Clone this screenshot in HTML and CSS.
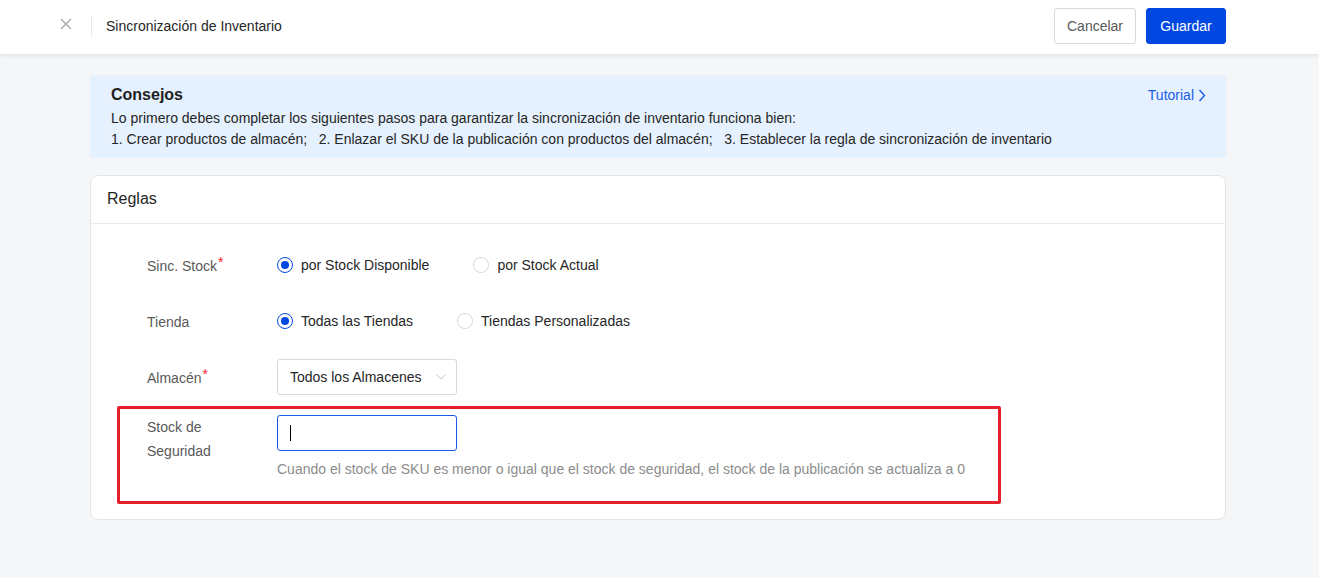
FILE: index.html
```html
<!DOCTYPE html>
<html lang="es">
<head>
<meta charset="utf-8">
<title>Sincronización de Inventario</title>
<link rel="stylesheet" href="styles.css">
</head>
<body>
<header class="topbar">
  <div class="topbar-left">
    <span class="close-btn" aria-label="Cerrar">
      <svg width="12" height="12" viewBox="0 0 12 12"><path d="M1 1L11 11M11 1L1 11" stroke="#a3a3a3" stroke-width="1.2" fill="none"/></svg>
    </span>
    <span class="vdivider"></span>
    <span class="page-title">Sincronización de Inventario</span>
  </div>
  <div class="topbar-actions">
    <button class="btn btn-default">Cancelar</button>
    <button class="btn btn-primary">Guardar</button>
  </div>
</header>

<main class="content">
  <section class="tips">
    <div class="tips-text">
      <div class="tips-title">Consejos</div>
      <div class="tips-line">Lo primero debes completar los siguientes pasos para garantizar la sincronización de inventario funciona bien:</div>
      <div class="tips-line">1. Crear productos de almacén;&nbsp;&nbsp;&nbsp;2. Enlazar el SKU de la publicación con productos del almacén;&nbsp;&nbsp;&nbsp;3. Establecer la regla de sincronización de inventario</div>
    </div>
    <a class="tutorial" href="#">Tutorial
      <svg width="8" height="13" viewBox="0 0 8 13"><path d="M1.5 1L6.5 6.5L1.5 12" stroke="#1a5be6" stroke-width="1.4" fill="none"/></svg>
    </a>
  </section>

  <section class="card">
    <div class="card-header">Reglas</div>
    <div class="card-body">
      <div class="form-row">
        <div class="form-label">Sinc. Stock<span class="req">*</span></div>
        <div class="form-control radios">
          <label class="radio checked"><span class="radio-dot"></span>por Stock Disponible</label>
          <label class="radio"><span class="radio-dot"></span>por Stock Actual</label>
        </div>
      </div>
      <div class="form-row">
        <div class="form-label">Tienda</div>
        <div class="form-control radios">
          <label class="radio checked"><span class="radio-dot"></span>Todas las Tiendas</label>
          <label class="radio"><span class="radio-dot"></span>Tiendas Personalizadas</label>
        </div>
      </div>
      <div class="form-row">
        <div class="form-label">Almacén<span class="req">*</span></div>
        <div class="form-control">
          <div class="select">
            <span>Todos los Almacenes</span>
            <svg width="10" height="6" viewBox="0 0 10 6"><path d="M0.5 0.5L5 5L9.5 0.5" stroke="#c4c4c4" stroke-width="1" fill="none"/></svg>
          </div>
        </div>
      </div>
      <div class="form-row form-row-last">
        <div class="form-label multiline">Stock de<br>Seguridad</div>
        <div class="form-control stacked">
          <div class="input focused"><span class="caret"></span></div>
          <div class="hint">Cuando el stock de SKU es menor o igual que el stock de seguridad, el stock de la publicación se actualiza a 0</div>
        </div>
      </div>
    </div>
    <div class="highlight-box"></div>
  </section>
</main>
</body>
</html>
```

FILE: styles.css
```css
* { box-sizing: border-box; }

html, body {
  margin: 0;
  padding: 0;
  height: 100%;
}

body {
  background: #f5f6f8;
  font-family: "Liberation Sans", Arial, sans-serif;
  color: #262626;
  font-size: 14px;
}

.topbar {
  height: 54px;
  background: #fff;
  box-shadow: 0 2px 4px rgba(0, 0, 0, 0.08);
  display: flex;
  align-items: center;
  justify-content: space-between;
  padding: 0 93px 0 60px;
  position: relative;
}

.topbar-left {
  display: flex;
  align-items: center;
  margin-top: -2px;
}

.close-btn {
  width: 12px;
  height: 12px;
  display: flex;
  margin-right: 19px;
  margin-top: -4px;
}

.vdivider {
  width: 1px;
  height: 20px;
  background: #e8e8e8;
  margin-right: 14px;
}

.page-title {
  font-size: 14px;
  color: #262626;
}

.topbar-actions {
  display: flex;
  gap: 10px;
  margin-top: -3px;
}

.btn {
  height: 36px;
  border-radius: 3px;
  font-family: "Liberation Sans", Arial, sans-serif;
  font-size: 14px;
  padding: 0 12px;
  cursor: pointer;
}

.btn-default {
  background: #fff;
  border: 1px solid #d9d9d9;
  color: #595959;
  width: 82px;
}

.btn-primary {
  background: #0148e3;
  border: 1px solid #0148e3;
  color: #fff;
  width: 80px;
}

.content {
  padding: 21px 93px 0 90px;
}

.tips {
  background: #e5f1fe;
  border-radius: 4px;
  padding: 9px 20px 8px 21px;
  display: flex;
  justify-content: space-between;
  align-items: flex-start;
}

.tips-title {
  font-size: 16px;
  font-weight: bold;
  line-height: 22px;
  margin-bottom: 2px;
  color: #1f1f1f;
}

.tips-line {
  line-height: 21px;
  color: #262626;
}

.tutorial {
  color: #1a5be6;
  text-decoration: none;
  font-size: 14px;
  display: flex;
  align-items: center;
  gap: 4px;
  margin-top: 3px;
}

.card {
  margin-top: 17px;
  background: #fff;
  border: 1px solid #e4e5e7;
  border-radius: 8px;
  position: relative;
}

.card-header {
  height: 48px;
  line-height: 46px;
  padding: 0 16px;
  font-size: 16px;
  color: #262626;
  border-bottom: 1px solid #ebebeb;
}

.card-body {
  padding: 23px 0 40px 56px;
}

.form-row {
  display: flex;
  margin-bottom: 20px;
}

.form-row-last {
  margin-bottom: 0;
}

.form-label {
  width: 130px;
  height: 36px;
  line-height: 36px;
  color: #595959;
  flex-shrink: 0;
  padding-top: 1px;
}

.form-label.multiline {
  line-height: 24px;
  height: auto;
  padding-top: 0;
}

.req {
  color: #f5222d;
  position: relative;
  top: -4px;
  margin-left: 1px;
}

.form-control {
  display: flex;
  align-items: center;
  min-height: 36px;
}

.form-control.stacked {
  flex-direction: column;
  align-items: flex-start;
}

.radio {
  display: flex;
  align-items: center;
  gap: 8px;
  margin-right: 44px;
  color: #262626;
  cursor: pointer;
  line-height: 20px;
  margin-top: -1px;
}

.radio-dot {
  width: 16px;
  height: 16px;
  border-radius: 50%;
  border: 1px solid #d9d9d9;
  background: #fff;
  position: relative;
  flex-shrink: 0;
}

.radio.checked .radio-dot {
  border-color: #0148e3;
}

.radio.checked .radio-dot::after {
  content: "";
  position: absolute;
  width: 8px;
  height: 8px;
  border-radius: 50%;
  background: #0148e3;
  left: 3px;
  top: 3px;
}

.select {
  width: 180px;
  height: 36px;
  border: 1px solid #d9d9d9;
  border-radius: 3px;
  display: flex;
  align-items: center;
  justify-content: space-between;
  padding: 0 10px 0 12px;
  color: #262626;
}

.input {
  width: 180px;
  height: 36px;
  border: 1px solid #d9d9d9;
  border-radius: 3px;
  display: flex;
  align-items: center;
  padding: 0 12px;
}

.input.focused {
  border-color: #1a5be6;
}

.caret {
  width: 1px;
  height: 16px;
  background: #000;
}

.hint {
  color: #8c8c8c;
  line-height: 20px;
  margin-top: 8px;
}

.highlight-box {
  position: absolute;
  left: 26px;
  top: 230px;
  width: 884px;
  height: 98px;
  border: 3px solid #e6202b;
  border-radius: 2px;
  pointer-events: none;
}
```
